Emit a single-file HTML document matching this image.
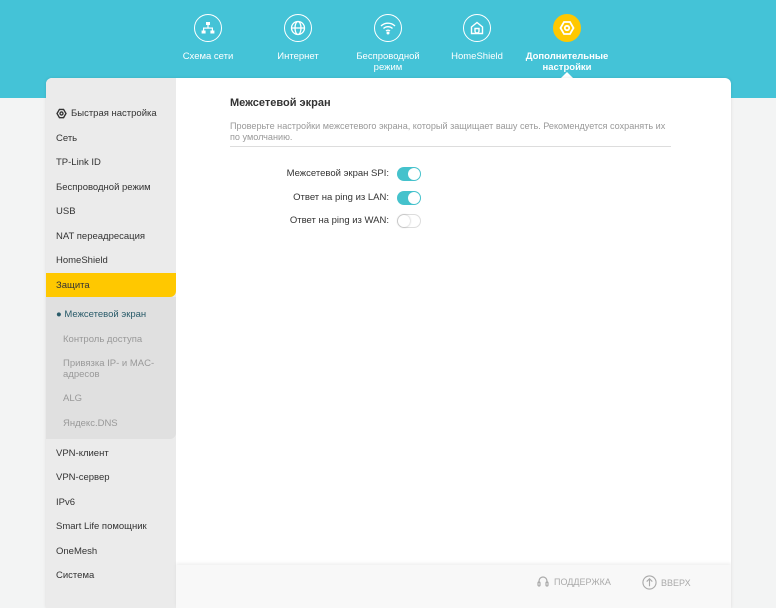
<!DOCTYPE html>
<html><head><meta charset="utf-8"><style>
*{margin:0;padding:0;box-sizing:border-box}
body{width:776px;height:600px;overflow:hidden;background:#f3f4f4;font-family:"Liberation Sans",sans-serif;position:relative}
.hdr{position:absolute;left:0;top:0;width:776px;height:98px;background:#44c3d7}
.nav{position:absolute;top:14px;width:110px;text-align:center;color:#fff;font-size:9.5px;line-height:11px}
.nav .ic{width:28px;height:28px;border:1.5px solid #fff;border-radius:50%;margin:0 auto 9px;display:flex;align-items:center;justify-content:center}
.nav.act .ic{background:#ffc800;border-color:#ffc800}
.nav.act{font-weight:bold}
.card{position:absolute;left:46px;top:78px;width:685px;height:530px;background:#fff;border-radius:6px 6px 0 0;overflow:hidden;box-shadow:0 0 3px rgba(0,0,0,.1)}
.side{position:absolute;left:0;top:0;width:130px;height:530px;background:#ebebeb}
.it{position:absolute;left:10px;font-size:9.5px;color:#333}
.sub{position:absolute;left:0;top:219px;width:130px;height:142px;background:#e0e0e0;border-radius:0 0 6px 0}
.sel{position:absolute;left:0;top:195px;width:130px;height:24px;background:#ffc800;border-radius:0 0 6px 0}
.si{position:absolute;left:17px;font-size:9.5px;color:#999;line-height:11px}
h1{position:absolute;left:184px;top:19px;font-size:11px;color:#333;font-weight:bold}
.desc{position:absolute;left:184px;top:43px;width:445px;font-size:9.1px;color:#999;line-height:11px}
.hr{position:absolute;left:184px;top:68px;width:441px;height:1px;background:#ddd}
.lbl{position:absolute;right:342px;font-size:9.5px;color:#333;white-space:nowrap}
.tg{position:absolute;left:351px;width:24px;height:14px;border-radius:7px;background:#45c2cc}
.tg::after{content:"";position:absolute;right:1px;top:1px;width:12px;height:12px;border-radius:50%;background:#fff}
.tg.off{background:#fff;border:1px solid #ddd}
.tg.off::after{left:0;top:0;right:auto;box-shadow:0 0 2px rgba(0,0,0,.3)}
.foot{position:absolute;left:130px;top:487px;width:555px;height:43px;background:#f8f8f8;box-shadow:0 -2px 3px rgba(0,0,0,.06)}
.fl{position:absolute;top:10px;font-size:9px;color:#aaa;display:flex;align-items:center;gap:4px}
</style></head><body>
<div class="hdr"></div>
<div class="nav" style="left:153px"><div class="ic"><svg width="14" height="14" viewBox="0 0 14 14" fill="#fff"><rect x="5" y="1" width="4" height="3"/><rect x="6.4" y="4" width="1.2" height="3"/><rect x="2" y="6.5" width="10" height="1.2"/><rect x="2" y="6.5" width="1.2" height="3"/><rect x="10.8" y="6.5" width="1.2" height="3"/><rect x="0.6" y="9.5" width="4" height="3"/><rect x="9.4" y="9.5" width="4" height="3"/></svg></div>Схема сети</div>
<div class="nav" style="left:243px"><div class="ic"><svg width="16" height="16" viewBox="0 0 16 16" fill="none" stroke="#fff" stroke-width="1.3"><circle cx="8" cy="8" r="6.5"/><ellipse cx="8" cy="8" rx="3" ry="6.5"/><path d="M1.5 8h13"/></svg></div>Интернет</div>
<div class="nav" style="left:333px"><div class="ic"><svg width="16" height="14" viewBox="0 0 16 14" fill="none" stroke="#fff" stroke-width="1.4"><path d="M1 5a10 10 0 0 1 14 0M3.5 7.5a6.5 6.5 0 0 1 9 0M6 10a3 3 0 0 1 4 0"/><circle cx="8" cy="12" r="0.8" fill="#fff"/></svg></div>Беспроводной<br>режим</div>
<div class="nav" style="left:422px"><div class="ic"><svg width="14" height="14" viewBox="0 0 14 14" fill="none" stroke="#fff" stroke-width="1.4"><path d="M1.5 6L7 1.5 12.5 6V12.5H1.5z"/><path d="M5 7.5v2.5a2 2 0 0 0 4 0V7.5z"/></svg></div>HomeShield</div>
<div class="nav act" style="left:512px"><div class="ic"><svg width="16" height="16" viewBox="0 0 16 16" fill="none" stroke="#fff" stroke-width="1.8"><path d="M5 2h6l3.5 6-3.5 6H5L1.5 8z"/><circle cx="8" cy="8" r="2.2"/></svg></div>Дополнительные<br>настройки</div>
<div style="position:absolute;left:561px;top:72px;width:0;height:0;border-left:6px solid transparent;border-right:6px solid transparent;border-bottom:6px solid #fff"></div>
<div class="card">
 <div class="side">
  <div class="it" style="top:30px;display:flex;align-items:center;gap:4px"><svg width="11" height="11" viewBox="0 0 16 16" fill="none" stroke="#333" stroke-width="2"><path d="M5 2h6l3.5 6-3.5 6H5L1.5 8z"/><circle cx="8" cy="8" r="2.2"/></svg>Быстрая настройка</div>
  <div class="it" style="top:55px">Сеть</div>
  <div class="it" style="top:79px">TP-Link ID</div>
  <div class="it" style="top:104px">Беспроводной режим</div>
  <div class="it" style="top:128px">USB</div>
  <div class="it" style="top:153px">NAT переадресация</div>
  <div class="it" style="top:177px">HomeShield</div>
  <div class="sub"></div>
  <div class="sel"></div>
  <div class="it" style="top:202px">Защита</div>
  <div class="si" style="top:231px;left:10px;color:#2a5c6a">● Межсетевой экран</div>
  <div class="si" style="top:256px">Контроль доступа</div>
  <div class="si" style="top:280px">Привязка IP- и MAC-<br>адресов</div>
  <div class="si" style="top:315px">ALG</div>
  <div class="si" style="top:340px">Яндекс.DNS</div>
  <div class="it" style="top:370px">VPN-клиент</div>
  <div class="it" style="top:394px">VPN-сервер</div>
  <div class="it" style="top:419px">IPv6</div>
  <div class="it" style="top:443px">Smart Life помощник</div>
  <div class="it" style="top:468px">OneMesh</div>
  <div class="it" style="top:492px">Система</div>
 </div>
 <h1>Межсетевой экран</h1>
 <div class="desc">Проверьте настройки межсетевого экрана, который защищает вашу сеть. Рекомендуется сохранять их по умолчанию.</div>
 <div class="hr"></div>
 <div class="lbl" style="top:90px">Межсетевой экран SPI:</div><div class="tg" style="top:89px"></div>
 <div class="lbl" style="top:114px">Ответ на ping из LAN:</div><div class="tg" style="top:113px"></div>
 <div class="lbl" style="top:137px">Ответ на ping из WAN:</div><div class="tg off" style="top:136px"></div>
 <div class="foot">
  <div class="fl" style="left:360px"><svg width="14" height="14" viewBox="0 0 14 14" fill="none" stroke="#aaa" stroke-width="1.2"><path d="M3 8V6a4 4 0 0 1 8 0v2"/><rect x="2" y="7" width="2" height="4" rx="1"/><rect x="10" y="7" width="2" height="4" rx="1"/></svg>ПОДДЕРЖКА</div>
  <div class="fl" style="left:466px"><svg width="15" height="15" viewBox="0 0 16 16" fill="none" stroke="#aaa" stroke-width="1.2"><circle cx="8" cy="8" r="7"/><path d="M8 12V4M5 7l3-3 3 3"/></svg>ВВЕРХ</div>
 </div>
</div>
</body></html>
